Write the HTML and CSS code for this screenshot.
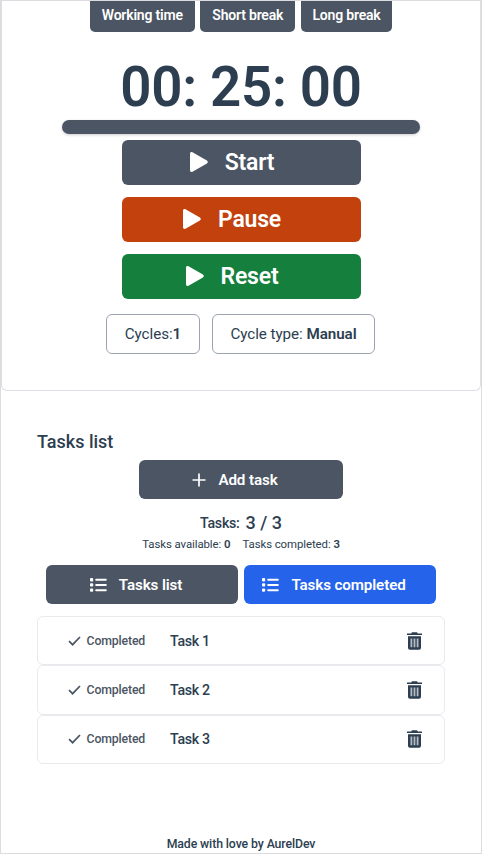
FILE: index.html
```html
<!DOCTYPE html>
<html lang="en">
<head>
<meta charset="utf-8">
<title>Pomodoro</title>
<link rel="stylesheet" href="styles.css">
</head>
<body>
<svg class="defs" aria-hidden="true">
  <symbol id="play" viewBox="0 0 18 20"><path d="M0 1.700C0 .3 1.300-.4 2.500.3L16.900 8.600c1.200.7 1.200 2.100 0 2.800L2.500 19.700C1.300 20.400 0 19.700 0 18.300Z" fill="currentColor"/></symbol>
  <symbol id="list" viewBox="0 0 17 14"><g fill="currentColor"><rect x="0" y="0" width="3.200" height="3.400" rx="1"/><rect x="0" y="5.200" width="3.200" height="3.400" rx="1"/><rect x="0" y="10.400" width="3.200" height="3.400" rx="1"/><rect x="5.200" y=".8" width="11.600" height="2" rx="1"/><rect x="5.200" y="6" width="11.600" height="2" rx="1"/><rect x="5.200" y="11.200" width="11.600" height="2" rx="1"/></g></symbol>
  <symbol id="check" viewBox="0 0 13 10"><path d="M1 5.200 4.600 8.700 12 1" fill="none" stroke="currentColor" stroke-width="1.700"/></symbol>
  <symbol id="trash" viewBox="0 0 15 18"><path fill="currentColor" d="M0 1.400H4.200L5 .3H10L10.800 1.400H15V3H0ZM1 4.200H14V15.800Q14 17.700 12.100 17.700H2.900Q1 17.700 1 15.800Z"/><path d="M3.500 6.500h1.800v8.800H3.500zM6.600 6.500h1.800v8.800h-1.800zM9.700 6.500h1.800v8.800H9.700z" fill="#fff" opacity=".65"/></symbol>
</svg>
<div class="app">
  <section class="timer">
    <nav class="modes"><button class="mode m1">Working time</button><button class="mode m2">Short break</button><button class="mode m3">Long break</button></nav>
    <div class="clock">00: 25: 00</div>
    <div class="progress"></div>
    <div class="controls">
      <button class="control"><svg><use href="#play"/></svg><span>Start</span></button>
      <button class="control pause"><svg><use href="#play"/></svg><span>Pause</span></button>
      <button class="control reset"><svg><use href="#play"/></svg><span>Reset</span></button>
    </div>
    <div class="cycles"><div class="pill count">Cycles:<b>1</b></div><div class="pill type">Cycle type: <b>Manual</b></div></div>
  </section>
  <main class="tasks">
    <h2>Tasks list</h2>
    <button class="btn add"><svg viewBox="0 0 14 14"><path d="M7 .5v13M.5 7h13" stroke="currentColor" stroke-width="1.700" fill="none"/></svg><span>Add task</span></button>
    <div class="total">Tasks: <span>3 / 3</span></div>
    <div class="stats"><span>Tasks available: <b>0</b></span><span>Tasks completed: <b>3</b></span></div>
    <div class="tabs"><button class="btn tab"><svg><use href="#list"/></svg><span>Tasks list</span></button><button class="btn tab active"><svg><use href="#list"/></svg><span>Tasks completed</span></button></div>
    <ul>
      <li><svg class="check"><use href="#check"/></svg><span class="status">Completed</span><span class="name">Task 1</span><svg class="trash"><use href="#trash"/></svg></li>
      <li><svg class="check"><use href="#check"/></svg><span class="status">Completed</span><span class="name">Task 2</span><svg class="trash"><use href="#trash"/></svg></li>
      <li><svg class="check"><use href="#check"/></svg><span class="status">Completed</span><span class="name">Task 3</span><svg class="trash"><use href="#trash"/></svg></li>
    </ul>
  </main>
  <footer>Made with love by AurelDev</footer>
</div>
</body>
</html>
```
FILE: styles.css
```css
* { box-sizing: border-box; }
body { margin: 0; font-family: Roboto, sans-serif; color: #2c3e50; background: #fff; }
button { font: inherit; border: 0; padding: 0; color: #fff; background: #4b5563; white-space: nowrap; }
b { font-weight: 600; }
ul { list-style: none; margin: 12px 0 0; padding: 0; }
.defs { display: none; }
.app { height: 854px; border: 1px solid #dcdce0; display: flex; flex-direction: column; overflow: hidden; }
.timer { height: 390px; flex: none; border: 1px solid #dcdfe4; border-top: 0; border-radius: 0 0 6px 6px; display: flex; flex-direction: column; align-items: center; }
.modes { display: flex; gap: 5.500px; }
.mode { height: 30.500px; border-radius: 0 0 5px 5px; font-size: 14px; letter-spacing: -.2px; font-weight: 600; line-height: 28px; padding-bottom: 2px; }
.m1 { width: 105px; }
.m2 { width: 95px; }
.m3 { width: 91.500px; }
.clock { height: 88px; padding-top: 22px; font-size: 54.700px; line-height: 66px; font-weight: 600; letter-spacing: -.3px; white-space: nowrap; }
.progress { width: 358px; height: 14px; border-radius: 7px; background: #4b5563; box-shadow: 0 1px 3px rgba(0, 0, 0, .2); }
.controls { margin: 6.200px 0 0 1px; display: flex; flex-direction: column; gap: 12px; }
.control { width: 239px; height: 45px; border-radius: 6px; font-size: 23px; letter-spacing: -.2px; font-weight: 600; display: flex; align-items: center; justify-content: center; gap: 17px; padding-right: 19px; }
.control svg { width: 18px; height: 20px; }
.pause { background: #c2410c; }
.reset { background: #15803d; }
.cycles { display: flex; gap: 12px; margin: 15px 1px 0 0; }
.pill { height: 40.500px; border: 1px solid #9ca3af; border-radius: 6px; text-align: center; line-height: 38px; font-size: 15.200px; letter-spacing: -.05px; }
.count { width: 94px; }
.type { width: 163px; }
.tasks { padding: 39px 36px 0; display: flex; flex-direction: column; align-items: center; }
.cycles + * { margin: 0; }
h2 { align-self: stretch; margin: 0; height: 30px; line-height: 24px; font-size: 18px; font-weight: 500; }
.btn { height: 39px; border-radius: 6px; font-size: 15.200px; letter-spacing: -.12px; font-weight: 600; display: flex; align-items: center; justify-content: center; }
.add { width: 204px; gap: 12px; padding-right: 12px; }
.add svg { width: 14px; height: 14px; }
.total { height: 39px; padding-top: 12px; line-height: 24px; font-size: 14.200px; letter-spacing: -.25px; font-weight: 500; display: flex; gap: 6px; }
.total span { font-size: 18px; letter-spacing: 0; }
.stats { display: flex; gap: 12px; font-size: 11.400px; letter-spacing: -.07px; line-height: 12px; height: 27px; }
.tabs { display: flex; gap: 6px; }
.tab { width: 192px; gap: 12px; padding-right: 12px; }
.tab svg { width: 17px; height: 14px; }
.active { background: #2563eb; }
ul { align-self: stretch; }
li { height: 49.400px; border: 1px solid #e9eaee; border-radius: 6px; display: flex; align-items: center; padding: 0 22px 0 30px; }
.check { width: 13px; height: 10px; margin-right: 5.500px; color: #4b5563; }
.status { width: 83.500px; font-size: 12.300px; letter-spacing: -.15px; font-weight: 500; color: #4b5563; }
.name { flex: 1; font-size: 14.200px; letter-spacing: -.3px; font-weight: 500; }
.trash { width: 15px; height: 18px; }
footer { margin-top: auto; height: 18px; line-height: 18px; text-align: center; font-size: 12.300px; letter-spacing: -.1px; font-weight: 500; }
```
